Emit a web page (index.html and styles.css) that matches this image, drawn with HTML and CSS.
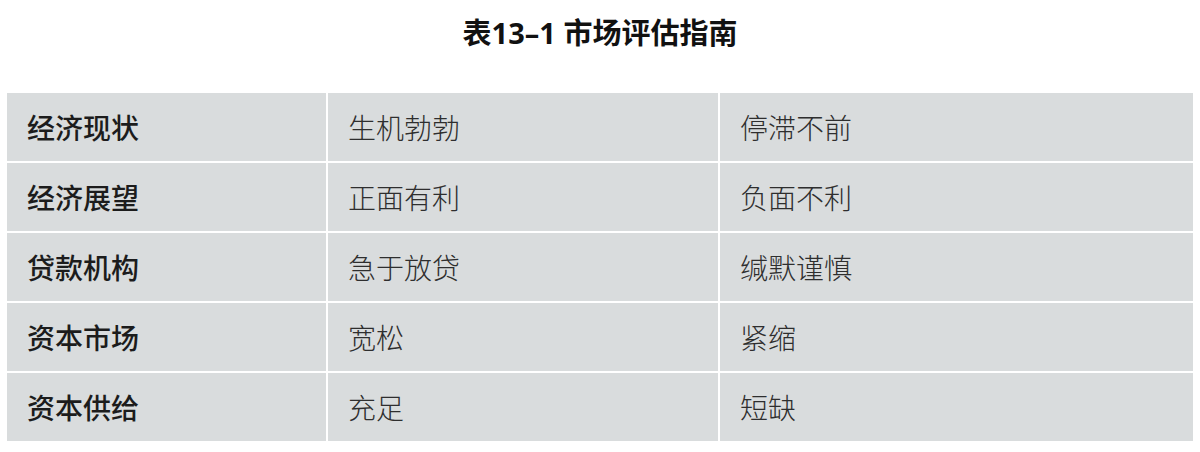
FILE: index.html
```html
<!DOCTYPE html>
<html lang="zh-CN">
<head>
<meta charset="utf-8">
<title>表13–1 市场评估指南</title>
<link rel="stylesheet" href="styles.css">
</head>
<body>
<div class="page">
  <h1 class="title">表13–1 市场评估指南</h1>
  <div class="table">
    <div class="cell head">经济现状</div><div class="cell">生机勃勃</div><div class="cell">停滞不前</div>
    <div class="cell head">经济展望</div><div class="cell">正面有利</div><div class="cell">负面不利</div>
    <div class="cell head">贷款机构</div><div class="cell">急于放贷</div><div class="cell">缄默谨慎</div>
    <div class="cell head">资本市场</div><div class="cell">宽松</div><div class="cell">紧缩</div>
    <div class="cell head">资本供给</div><div class="cell">充足</div><div class="cell">短缺</div>
  </div>
</div>
</body>
</html>
```

FILE: styles.css
```css
html, body {
  margin: 0;
  padding: 0;
  background: #ffffff;
}
.page {
  width: 1200px;
  height: 452px;
  padding-top: 13px;
  box-sizing: border-box;
}
.title {
  margin: 0;
  height: 80px;
  line-height: 40px;
  text-align: center;
  font-family: "Noto Sans", "Noto Sans CJK SC", sans-serif;
  font-weight: 700;
  font-size: 29px;
  color: #111111;
  letter-spacing: 0;
}
.table {
  margin-left: 7px;
  width: 1186px;
  display: grid;
  grid-template-columns: 319px 390px 473px;
  grid-auto-rows: 68px;
  gap: 2px;
  background: #ffffff;
}
.cell {
  background: #d9dcdd;
  display: flex;
  align-items: center;
  padding-left: 20px;
  font-family: "Noto Sans CJK SC", sans-serif;
  font-weight: 300;
  font-size: 28px;
  color: #2e2e2e;
}
.head {
  font-weight: 500;
  color: #1c1c1c;
}
```
